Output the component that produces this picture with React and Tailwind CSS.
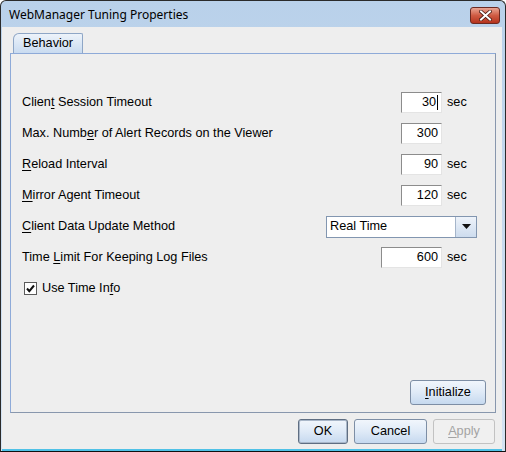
const font = { fontFamily: '"Liberation Sans", Arial, sans-serif' };

const U = ({ children }) => <span className="underline underline-offset-2">{children}</span>;

const Field = ({ value, width, caret }) => (
    <div
        className={`h-[21px] ${width} bg-white border-t border-l border-[#8c8c8c] border-b border-r border-b-[#e4e4e4] border-r-[#e4e4e4] flex items-center justify-end pr-[3px] text-[12.7px] text-black`}
    >
        <span>{value}</span>
        {caret && <span className="w-px h-[15px] bg-black ml-px" />}
    </div>
);

const Row = ({ label, children }) => (
    <div className="h-[31px] flex items-center justify-between">
        <span className="text-[12.7px] text-black">{label}</span>
        {children}
    </div>
);

const FieldGroup = ({ value, width, sec, caret }) => (
    <div className="flex items-center w-[76px] justify-end">
        <Field value={value} width={width} caret={caret} />
        <span className="w-[35px] pl-[5px] text-[12.7px] text-black">{sec ? 'sec' : ''}</span>
    </div>
);

const Button = ({ children, w, variant }) => {
    if (variant === 'disabled') {
        return (
            <div className={`h-[25px] ${w} rounded-[3px] border border-[#c2c2c2] bg-[#f0f0f0] flex items-center justify-center text-[12.7px] text-[#a3a3a3]`}>
                {children}
            </div>
        );
    }
    return (
        <div
            className={`h-[25px] ${w} rounded-[3px] border ${variant === 'default' ? 'border-[#5f6e82] shadow-[inset_0_0_0_1px_#a9b7c9]' : 'border-[#7d8ea5]'} bg-gradient-to-b from-[#f1f6fc] via-[#dfeaf7] to-[#c6d9ef] flex items-center justify-center text-[12.7px] text-black`}
        >
            {children}
        </div>
    );
};

export default function App() {
    return (
        <div style={font} className="w-[506px] h-[452px] bg-white">
            <div className="w-[506px] h-[452px] rounded-t-[6px] border border-[#2a2a2a] border-b-[#101010] bg-gradient-to-b from-[#b9d1ea] to-[#d4e3f3] flex flex-col overflow-hidden">
                {/* title bar */}
                <div className="h-[26px] flex items-center justify-between pl-[8px] pr-[5px] shrink-0">
                    <span className="text-black pt-[1px]" style={{ fontFamily: '"Noto Sans", "Liberation Sans", sans-serif', fontSize: '12px' }}>
                        WebManager Tuning Properties
                    </span>
                    <div className="w-[30px] h-[17px] mt-[2px] rounded-[3px] border border-[#6b2a22] bg-gradient-to-b from-[#e8a493] via-[#cf5b43] to-[#b5321c] flex items-center justify-center">
                        <svg width="13" height="11" viewBox="0 0 13 11">
                            <path d="M2 1.5 L11 9.5 M11 1.5 L2 9.5" stroke="#4a1a12" strokeWidth="3.6" strokeLinecap="square" />
                            <path d="M2 1.5 L11 9.5 M11 1.5 L2 9.5" stroke="#ffffff" strokeWidth="2" strokeLinecap="square" />
                        </svg>
                    </div>
                </div>

                {/* content */}
                <div className="flex-1 ml-[1px] mr-[3px] border-b-2 border-[#4fc1e6] bg-[#eeeeee] flex flex-col pt-[6px] pl-[8px] pr-[6px] pb-[5px] min-h-0">
                    {/* tab */}
                    <div className="flex shrink-0">
                        <div className="ml-[3px] h-[20px] px-[9px] rounded-tl-[6px] rounded-tr-[2px] border border-b-0 border-[#8ea6c6] bg-gradient-to-b from-[#edf3fa] to-[#c9dbf0] flex items-center text-[12.7px] text-black">
                            Behavior
                        </div>
                    </div>

                    {/* panel */}
                    <div className="flex-1 border border-[#8eaad8] border-r-[#8897ad] border-b-[#8897ad] flex flex-col pt-[33px] pl-[11px] pr-[18px] pb-[7px]">
                        <Row label={<>Clien<U>t</U> Session Timeout</>}>
                            <FieldGroup value="30" width="w-[41px]" sec caret />
                        </Row>
                        <Row label={<>Max. Numb<U>e</U>r of Alert Records on the Viewer</>}>
                            <FieldGroup value="300" width="w-[41px]" />
                        </Row>
                        <Row label={<><U>R</U>eload Interval</>}>
                            <FieldGroup value="90" width="w-[41px]" sec />
                        </Row>
                        <Row label={<><U>M</U>irror Agent Timeout</>}>
                            <FieldGroup value="120" width="w-[41px]" sec />
                        </Row>
                        <Row label={<><U>C</U>lient Data Update Method</>}>
                            <div className="w-[151px] h-[22px] border border-[#8296b0] bg-white flex">
                                <div className="flex-1 flex items-center pl-[3px] text-[12.7px] text-black">Real Time</div>
                                <div className="w-[21px] border-l border-[#a5b5ca] bg-gradient-to-b from-[#eef3fa] to-[#cddcee] flex items-center justify-center">
                                    <svg width="9" height="5" viewBox="0 0 9 5">
                                        <path d="M0 0 H9 L4.5 5 Z" fill="#111" />
                                    </svg>
                                </div>
                            </div>
                        </Row>
                        <Row label={<>Time <U>L</U>imit For Keeping Log Files</>}>
                            <div className="flex items-center w-[96px] justify-end">
                                <Field value="600" width="w-[61px]" />
                                <span className="w-[35px] pl-[5px] text-[12.7px] text-black">sec</span>
                            </div>
                        </Row>
                        <div className="h-[31px] flex items-center pl-[2px] gap-[5px]">
                            <div className="w-[13px] h-[13px] border border-[#5b5b5b] bg-white flex items-center justify-center">
                                <svg width="9" height="9" viewBox="0 0 9 9">
                                    <path d="M1 4.5 L3.3 7.2 L8 1.5" stroke="#111" strokeWidth="2" fill="none" />
                                </svg>
                            </div>
                            <span className="text-[12.7px] text-black">Use Time In<U>f</U>o</span>
                        </div>

                        <div className="flex-1" />
                        <div className="flex justify-end mr-[-9px]">
                            <Button w="w-[76px]"><U>I</U>nitialize</Button>
                        </div>
                    </div>

                    {/* buttons */}
                    <div className="flex justify-end gap-[6px] pt-[6px] pr-[1px] shrink-0">
                        <Button w="w-[50px]" variant="default">OK</Button>
                        <Button w="w-[73px]">Cancel</Button>
                        <Button w="w-[62px]" variant="disabled"><U>A</U>pply</Button>
                    </div>
                </div>
            </div>
        </div>
    );
}
